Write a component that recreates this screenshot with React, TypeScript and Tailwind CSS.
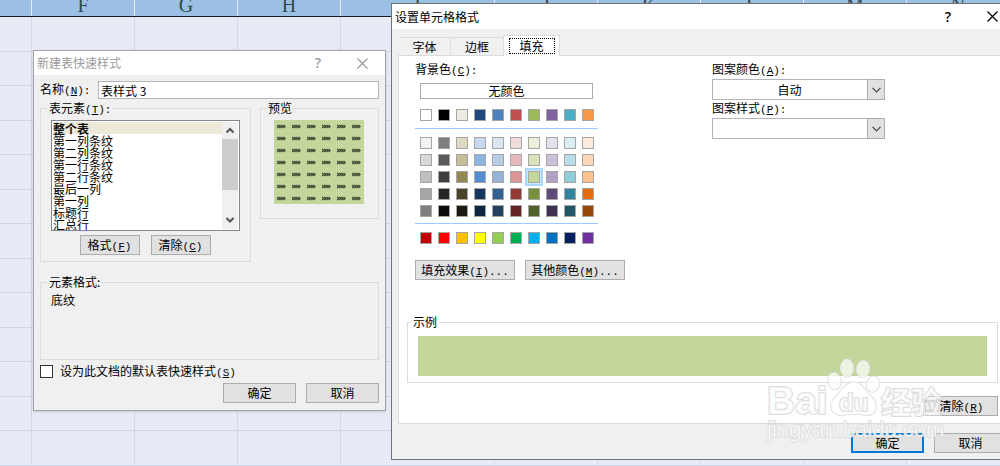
import { useState } from 'react'
import type { ReactNode } from 'react'
import clsx from 'clsx'

const COLUMNS = ['F', 'G', 'H', 'I', 'J', 'K', 'L', 'M', 'N']
const GRID_ROWS = 13

const TABLE_ELEMENTS = [
  '整个表',
  '第一列条纹',
  '第二列条纹',
  '第一行条纹',
  '第二行条纹',
  '最后一列',
  '第一列',
  '标题行',
  '汇总行',
]

const THEME = [
  '#ffffff', '#000000', '#eeece1', '#1f497d', '#4f81bd',
  '#c0504d', '#9bbb59', '#8064a2', '#4bacc6', '#f79646',
]

const SHADES = [
  '#f2f2f2', '#7f7f7f', '#ddd9c3', '#c6d9f0', '#dbe5f1',
  '#f2dcdb', '#ebf1dd', '#e5e0ec', '#dbeef3', '#fdeada',
  '#d8d8d8', '#595959', '#c4bd97', '#8db3e2', '#b8cce4',
  '#e5b9b7', '#d7e3bc', '#ccc1d9', '#b7dde8', '#fbd5b5',
  '#bfbfbf', '#3f3f3f', '#938953', '#548dd4', '#95b3d7',
  '#d99694', '#c3d69b', '#b2a2c7', '#92cddc', '#fac08f',
  '#a5a5a5', '#262626', '#494429', '#17365d', '#366092',
  '#953734', '#76923c', '#5f497a', '#31859b', '#e36c09',
  '#7f7f7f', '#0c0c0c', '#1d1b10', '#0f243e', '#244061',
  '#632423', '#4f6128', '#3f3151', '#205867', '#974806',
]

const STANDARD = [
  '#c00000', '#ff0000', '#ffc000', '#ffff00', '#92d050',
  '#00b050', '#00b0f0', '#0070c0', '#002060', '#7030a0',
]

interface HotkeyProps {
  text: string
  hotkey: string
  suffix?: string
}

const Hotkey = ({ text, hotkey, suffix }: HotkeyProps) => (
  <>
    {text}
    <span className="font-['Liberation_Mono',monospace] text-[11px] leading-none">
      (<u>{hotkey}</u>){suffix}
    </span>
  </>
)

interface PushButtonProps {
  children: ReactNode
  className: string
  primary?: boolean
}

const PushButton = ({ children, className, primary }: PushButtonProps) => (
  <button
    type="button"
    className={clsx(
      'h-5 shrink-0 whitespace-nowrap bg-[#e1e1e1]',
      primary ? 'border-2 border-[#0078d7]' : 'border border-[#adadad]',
      className,
    )}
  >
    {children}
  </button>
)

interface TitleBarProps {
  title: string
  inactive?: boolean
  className: string
}

const TitleBar = ({ title, inactive, className }: TitleBarProps) => (
  <header
    className={clsx(
      'flex items-center bg-white pl-[3px]',
      inactive ? 'text-[#9a9a9a]' : 'text-black',
      className,
    )}
  >
    <h2 className="flex-1">{title}</h2>
    <button
      type="button"
      aria-label="帮助"
      className="w-5 font-['Open_Sans',sans-serif] text-sm leading-4 font-semibold"
    >
      ?
    </button>
    <button type="button" aria-label="关闭" className="ml-6 flex w-5 justify-center">
      <svg viewBox="0 0 11 11" className="size-[11px]" fill="none" stroke="currentColor" strokeWidth="1.2">
        <path d="M.5 .5l10 10M10.5 .5l-10 10" />
      </svg>
    </button>
  </header>
)

interface SwatchesProps {
  colors: string[]
  selected: string
  onSelect: (color: string) => void
}

const Swatches = ({ colors, selected, onSelect }: SwatchesProps) => (
  <div className="ml-[5px] grid grid-cols-[repeat(10,12px)] gap-x-[6px] gap-y-[5px]">
    {colors.map((color, i) => (
      <button
        key={i}
        type="button"
        aria-label={color}
        onClick={() => onSelect(color)}
        style={{ backgroundColor: color }}
        className={clsx(
          'size-3 border border-[#a6a6a6]',
          color === selected && 'ring-1 ring-[#cce8ff] outline-2 outline-offset-1 outline-[#a8d8ff]',
        )}
      />
    ))}
  </div>
)

interface DropDownProps {
  id: string
  options: string[]
}

const DropDown = ({ id, options }: DropDownProps) => (
  <div className="relative h-[21px] w-[173px]">
    <select
      id={id}
      className="size-full appearance-none border border-[#b4b4b9] bg-white pr-[18px] text-center"
    >
      {options.map((option) => (
        <option key={option}>{option}</option>
      ))}
    </select>
    <span className="pointer-events-none absolute inset-y-0 right-0 flex w-[18px] items-center justify-center border border-[#adadad] bg-[#e1e1e1]">
      <svg viewBox="0 0 9 6" className="h-[6px] w-[9px]" fill="none" stroke="#444" strokeWidth="1.2">
        <path d="M.5 .8l4 4 4-4" />
      </svg>
    </span>
  </div>
)

const Sheet = () => (
  <div className="flex min-h-screen flex-col bg-[#e8ebf5]">
    <div className="flex h-[17px] overflow-hidden border-b border-[#1c1c1c] bg-[#9bc0e4]">
      <div className="w-8 shrink-0 border-r border-[#e4edf7]" />
      {COLUMNS.map((name) => (
        <div
          key={name}
          className={clsx(
            'shrink-0 border-r border-[#e4edf7] text-center font-["Liberation_Serif",serif] text-xl leading-[11px] text-[#2f4a4a]',
            name === 'I' ? 'w-[154px]' : 'w-[103px]',
          )}
        >
          {name}
        </div>
      ))}
    </div>
    <div className="flex flex-1 flex-col">
      {Array.from({ length: GRID_ROWS }, (_, row) => (
        <div key={row} className="flex flex-1 overflow-hidden border-b border-[#d0d7e8]">
          <div className="w-8 shrink-0 border-r border-[#d0d7e8]" />
          {COLUMNS.map((name) => (
            <div
              key={name}
              className={clsx(
                'shrink-0 border-r border-[#d0d7e8]',
                name === 'I' ? 'w-[154px]' : 'w-[103px]',
              )}
            />
          ))}
        </div>
      ))}
    </div>
  </div>
)

const StylePreview = () => (
  <div className="grid w-[90px] grid-cols-6 bg-[#c3d69b]">
    {Array.from({ length: 42 }, (_, i) => (
      <svg key={i} viewBox="0 0 15 12" className="h-3 w-full" fill="none" stroke="#3c4630" strokeWidth="1.3">
        <path d="M3.2 5l1.5 1.5L3.2 8M5.3 5l1.5 1.5L5.3 8M7.4 5l1.5 1.5L7.4 8M9.5 5l1.5 1.5L9.5 8" />
      </svg>
    ))}
  </div>
)

const ElementList = () => (
  <div className="flex h-[111px] w-[189px] border border-[#828790] bg-white p-px">
    <select
      size={9}
      aria-label="表元素"
      defaultValue="整个表"
      className="h-[108px] flex-1 appearance-none overflow-hidden"
    >
      {TABLE_ELEMENTS.map((name) => (
        <option
          key={name}
          className="flex h-3 min-h-0 items-center p-0 checked:bg-linear-to-b checked:from-[#ece9d8] checked:to-[#ece9d8] checked:font-bold"
        >
          {name}
        </option>
      ))}
    </select>
    <div className="flex w-4 flex-col items-center bg-[#f0f0f0]">
      <svg viewBox="0 0 16 17" className="h-[17px] w-4" fill="none" stroke="#555" strokeWidth="2">
        <path d="M4.5 10.5L8 7l3.5 3.5" />
      </svg>
      <div className="h-[51px] w-full bg-[#cdcdcd]" />
      <svg viewBox="0 0 16 17" className="mt-auto h-[17px] w-4" fill="none" stroke="#555" strokeWidth="2">
        <path d="M4.5 6L8 9.5 11.5 6" />
      </svg>
    </div>
  </div>
)

const QuickStyleDialog = () => (
  <section className="absolute top-[50px] left-[33px] w-[353px] border border-[#a0a2a8] bg-[#f0f0f0] shadow-sm">
    <TitleBar title="新建表快速样式" inactive className="h-6 pr-[13px]" />
    <form className="px-[6px] pt-[6px] pb-[7px]">
      <div className="flex">
        <label htmlFor="style-name" className="w-[58px]">
          <Hotkey text="名称" hotkey="N" suffix=":" />
        </label>
        <input
          id="style-name"
          defaultValue="表样式 3"
          className="h-[18px] min-w-0 flex-1 border border-[#b4b4b9] bg-white px-[2px]"
        />
      </div>

      <div className="mt-px flex items-start gap-[9px]">
        <fieldset className="w-[211px] border border-[#dcdcdc] px-[10px] pt-1 pb-[6px]">
          <legend className="-ml-1 px-[2px]">
            <Hotkey text="表元素" hotkey="T" suffix=":" />
          </legend>
          <ElementList />
          <div className="mt-1 flex justify-center gap-[11px] pr-[1px]">
            <PushButton className="w-[60px]">
              <Hotkey text="格式" hotkey="F" />
            </PushButton>
            <PushButton className="w-[60px]">
              <Hotkey text="清除" hotkey="C" />
            </PushButton>
          </div>
        </fieldset>
        <fieldset className="flex-1 border border-[#dcdcdc] px-[13px] pt-1 pb-[14px]">
          <legend className="-ml-2 px-[2px]">预览</legend>
          <StylePreview />
        </fieldset>
      </div>

      <fieldset className="mt-3 min-h-[86px] border border-[#dcdcdc] px-[10px] pt-[2px]">
        <legend className="-ml-1 px-[2px]">元素格式:</legend>
        <p>底纹</p>
      </fieldset>

      <div className="mt-[3px] flex items-center gap-[7px]">
        <input
          id="set-default"
          type="checkbox"
          className="size-[13px] appearance-none border border-[#333] bg-white"
        />
        <label htmlFor="set-default">
          <Hotkey text="设为此文档的默认表快速样式" hotkey="S" />
        </label>
      </div>
      <div className="mt-1 flex justify-end gap-[10px]">
        <PushButton className="w-[73px]">确定</PushButton>
        <PushButton className="w-[73px]">取消</PushButton>
      </div>
    </form>
  </section>
)

const FormatCellsDialog = () => {
  const [fill, setFill] = useState('#c3d69b')

  return (
    <section className="absolute top-[3px] -right-[14px] left-[391px] border border-[#6f7478] bg-[#f0f0f0]">
      <TitleBar title="设置单元格格式" className="h-[25px] pr-[11px]" />
      <div className="px-[6px] pt-[6px] pb-[6px]">
        <div role="tablist" className="flex items-end pl-px">
          <button type="button" role="tab" className="h-[18px] w-[52px] border-t border-r border-[#dcdcdc]">
            字体
          </button>
          <button type="button" role="tab" className="h-[18px] w-[52px] border-t border-[#dcdcdc]">
            边框
          </button>
          <button
            type="button"
            role="tab"
            aria-selected
            className="z-10 -mb-px flex h-[21px] w-[57px] items-center justify-center border border-b-0 border-[#dcdcdc] bg-white"
          >
            <span className="w-[46px] border border-dotted border-black leading-[14px]">填充</span>
          </button>
        </div>

        <div className="border border-[#dcdcdc] bg-white pt-[5px] pr-2 pb-[7px] pl-2">
          <div className="flex pl-2">
            <div className="w-[297px]">
              <p>
                <Hotkey text="背景色" hotkey="C" suffix=":" />
              </p>
              <button
                type="button"
                className="mt-[6px] ml-[5px] flex h-4 w-[173px] items-center justify-center border border-[#adadad] bg-white"
              >
                无颜色
              </button>
              <div className="mt-[10px] w-[183px]">
                <Swatches colors={THEME} selected={fill} onSelect={setFill} />
                <hr className="mt-[7px] mb-2 h-px border-0 bg-[#99c9ff]" />
                <Swatches colors={SHADES} selected={fill} onSelect={setFill} />
                <hr className="mt-[6px] mb-2 h-px border-0 bg-[#99c9ff]" />
                <Swatches colors={STANDARD} selected={fill} onSelect={setFill} />
              </div>
              <div className="mt-4 flex gap-[10px]">
                <PushButton className="w-[100px]">
                  <Hotkey text="填充效果" hotkey="I" suffix="..." />
                </PushButton>
                <PushButton className="w-[100px]">
                  <Hotkey text="其他颜色" hotkey="M" suffix="..." />
                </PushButton>
              </div>
            </div>

            <div>
              <label htmlFor="pattern-color" className="mb-[2px] block">
                <Hotkey text="图案颜色" hotkey="A" suffix=":" />
              </label>
              <DropDown id="pattern-color" options={['自动']} />
              <label htmlFor="pattern-style" className="mb-[2px] block">
                <Hotkey text="图案样式" hotkey="P" suffix=":" />
              </label>
              <DropDown id="pattern-style" options={['']} />
            </div>
          </div>

          <fieldset className="mt-[34px] border border-[#dcdcdc] px-[10px] pt-[6px] pb-[6px]">
            <legend className="-ml-[7px] px-[2px]">示例</legend>
            <div className="h-10" style={{ backgroundColor: fill }} />
          </fieldset>
          <div className="mt-[13px] flex justify-end">
            <PushButton className="w-[73px]">
              <Hotkey text="清除" hotkey="R" />
            </PushButton>
          </div>
        </div>

        <div className="mt-[9px] flex justify-end gap-[10px]">
          <PushButton primary className="w-[73px]">
            确定
          </PushButton>
          <PushButton className="w-[73px]">取消</PushButton>
        </div>
      </div>
    </section>
  )
}

const Watermark = () => (
  <svg
    viewBox="0 0 190 95"
    className="pointer-events-none absolute top-[355px] right-[55px] h-[95px] w-[190px]"
    fill="#fff"
    fillOpacity="0.7"
    stroke="#d4d4d4"
    strokeOpacity="0.8"
    strokeWidth="1.5"
    paintOrder="stroke"
  >
    <path d="M99 27c7 0 10 6 14 11 4 4 8 7 8 13 0 8-6 10-11 9-4-1-7-1-11-1s-7 0-11 1c-6 1-12-2-12-9 0-6 5-9 8-13 4-5 8-11 15-11z" />
    <ellipse cx="79.5" cy="26" rx="6.5" ry="8.5" transform="rotate(-10 79.5 26)" />
    <ellipse cx="92" cy="13" rx="6.5" ry="9" />
    <ellipse cx="108" cy="14" rx="6.5" ry="8.5" transform="rotate(10 108 14)" />
    <ellipse cx="118" cy="29" rx="6.5" ry="8" transform="rotate(15 118 29)" />
    <g className="font-['Liberation_Sans',sans-serif] font-bold" strokeWidth="2">
      <text x="12" y="59" fontSize="39">Bai</text>
      <text x="84" y="56" fontSize="24">du</text>
    </g>
    <g className="font-['Noto_Sans_CJK_SC',sans-serif] font-bold" strokeWidth="2">
      <text x="126" y="58" fontSize="30">经验</text>
    </g>
    <g className="font-['Liberation_Sans',sans-serif]">
      <text x="12" y="82" fontSize="22">jingyan.baidu.com</text>
    </g>
  </svg>
)

export default function App() {
  return (
    <main className="relative overflow-hidden font-['Noto_Sans_CJK_SC',sans-serif] text-xs leading-4 text-black">
      <Sheet />
      <QuickStyleDialog />
      <FormatCellsDialog />
      <Watermark />
    </main>
  )
}
